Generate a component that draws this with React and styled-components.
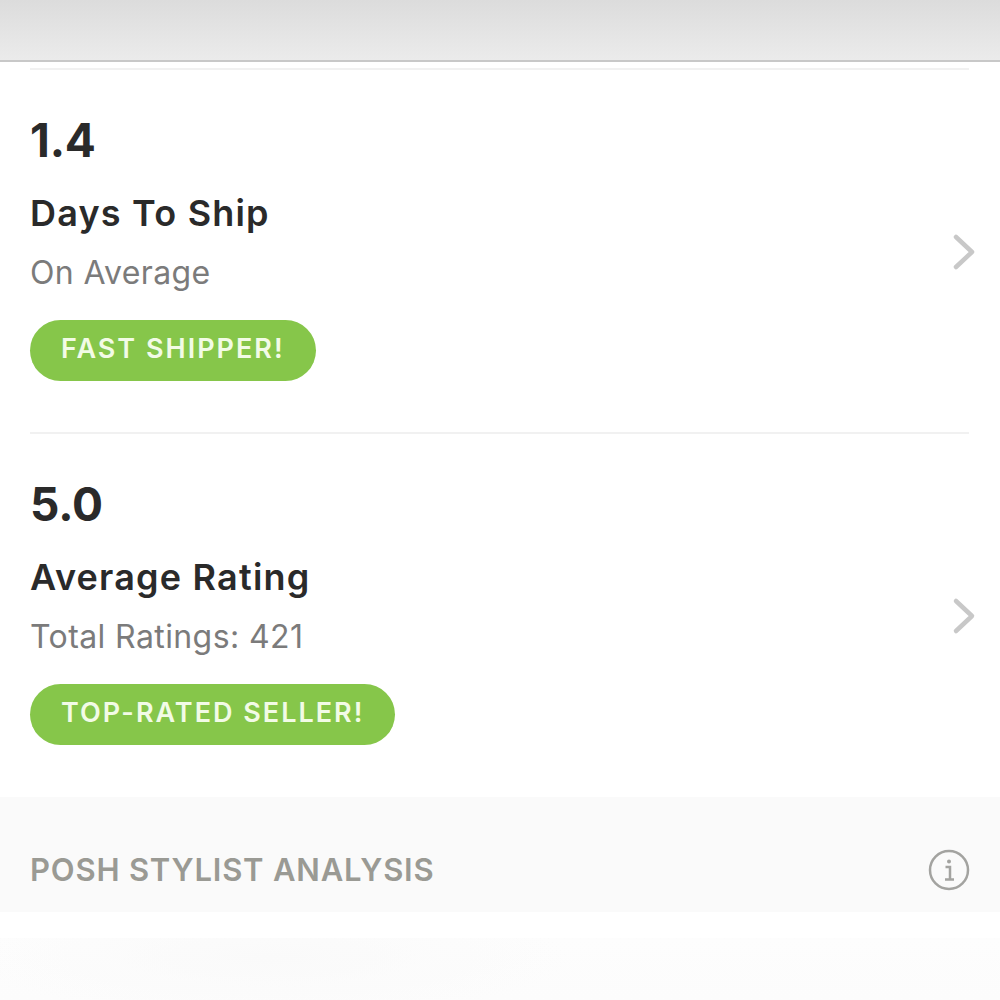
import React from 'react';
import styled, { createGlobalStyle } from 'styled-components';

const GlobalStyle = createGlobalStyle`
  html, body {
    margin: 0;
    padding: 0;
    background: #fff;
  }
  body {
    font-family: Inter, "Liberation Sans", sans-serif;
  }
`;

const Page = styled.div`
  width: 1000px;
  height: 1000px;
  overflow: hidden;
  display: flex;
  flex-direction: column;
  background: #fff;
`;

const TopBar = styled.div`
  height: 60px;
  flex: none;
  background: linear-gradient(180deg, #dcdcdc 0%, #ebebeb 100%);
  border-bottom: 2px solid #c8c8c8;
`;

const List = styled.div`
  padding: 6px 31px 1px 30px;
  display: flex;
  flex-direction: column;
`;

const Row = styled.div`
  height: 364px;
  box-sizing: border-box;
  border-top: 2px solid #f1f1f1;
  display: flex;
  align-items: center;
  justify-content: space-between;
`;

const RowBody = styled.div`
  display: flex;
  flex-direction: column;
  align-items: flex-start;
  margin-bottom: 9px;
`;

const Value = styled.div`
  font-size: 46px;
  line-height: 56px;
  font-weight: 700;
  color: #2a2a2a;
  letter-spacing: -0.2px;
`;

const Title = styled.div`
  margin-top: 23px;
  font-size: 36px;
  line-height: 44px;
  font-weight: 600;
  color: #2a2a2a;
  letter-spacing: 1.2px;
`;

const Note = styled.div`
  margin-top: 18px;
  font-size: 32px;
  line-height: 40px;
  color: #7b7b7b;
  letter-spacing: 0.4px;
`;

const Badge = styled.div`
  margin-top: 27px;
  height: 61px;
  box-sizing: border-box;
  padding: 0 31px 4px 31px;
  border-radius: 31px;
  background: #86c64a;
  display: flex;
  align-items: center;
  font-size: 27px;
  font-weight: 600;
  color: #f2fbe6;
  letter-spacing: 2px;
`;

const Chevron = styled.svg`
  width: 24px;
  height: 38px;
  margin: 2px -7px 0 0;
  flex: none;
`;

const SectionHead = styled.div`
  height: 115px;
  box-sizing: border-box;
  flex: none;
  padding: 30px 30px 0 30px;
  background: #fafafa;
  display: flex;
  align-items: center;
  justify-content: space-between;
`;

const SectionTitle = styled.div`
  font-size: 31px;
  font-weight: 600;
  color: #9a9a94;
  letter-spacing: 0.8px;
`;

const InfoIcon = styled.svg`
  width: 42px;
  height: 42px;
  flex: none;
`;

const Fade = styled.div`
  margin-top: 26px;
  flex: 1;
  background:
    radial-gradient(ellipse 300px 60px at 270px 20px, #fafafa 0%, rgba(250, 250, 250, 0) 100%),
    linear-gradient(180deg, #fdfdfd 0%, #fcfcfc 100%);
`;

function ChevronIcon() {
  return (
    <Chevron viewBox="0 0 24 38" fill="none">
      <path d="M4 4 L20 19 L4 34" stroke="#c8c8c8" strokeWidth="4.5" strokeLinecap="round" strokeLinejoin="round" />
    </Chevron>
  );
}

const stats = [
  { value: '1.4', title: 'Days To Ship', note: 'On Average', badge: 'FAST SHIPPER!' },
  { value: '5.0', title: 'Average Rating', note: 'Total Ratings: 421', badge: 'TOP-RATED SELLER!' },
];

export default function App() {
  return (
    <Page>
      <GlobalStyle />
      <TopBar />
      <List>
        {stats.map((stat) => (
          <Row key={stat.value}>
            <RowBody>
              <Value>{stat.value}</Value>
              <Title>{stat.title}</Title>
              <Note>{stat.note}</Note>
              <Badge>{stat.badge}</Badge>
            </RowBody>
            <ChevronIcon />
          </Row>
        ))}
      </List>
      <SectionHead>
        <SectionTitle>POSH STYLIST ANALYSIS</SectionTitle>
        <InfoIcon viewBox="0 0 42 42" fill="none">
          <circle cx="21" cy="21" r="19" stroke="#a3a3a0" strokeWidth="2.5" />
          <circle cx="21" cy="12.5" r="2" fill="#a3a3a0" />
          <path d="M17.5 18 H22 V30 M17 30.5 H26" stroke="#a3a3a0" strokeWidth="2.5" />
        </InfoIcon>
      </SectionHead>
      <Fade />
    </Page>
  );
}
